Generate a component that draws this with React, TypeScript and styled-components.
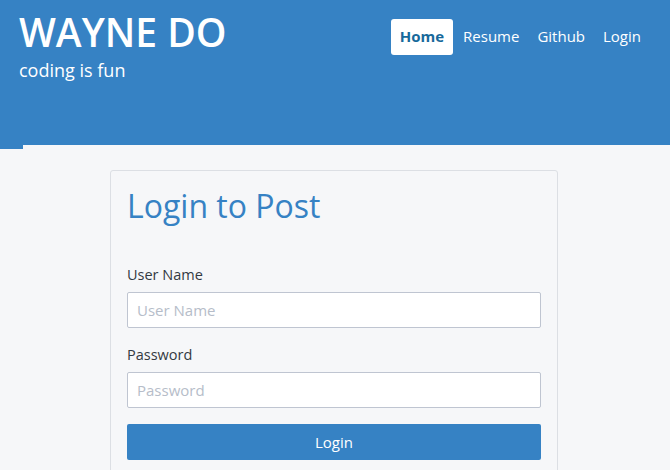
import React from "react";
import styled, { createGlobalStyle } from "styled-components";

const Global = createGlobalStyle`
  body {
    margin: 0;
    background: #f6f7f9;
    font-family: "Open Sans", "Noto Sans", sans-serif;
  }
  * { box-sizing: border-box; }
`;

const Header = styled.header`
  background: #3682c4;
  height: 145px;
  padding: 0 20px 0 19px;
  display: flex;
  justify-content: space-between;
  align-items: flex-start;
`;

const Tab = styled.div`
  width: 23px;
  height: 4px;
  background: #3682c4;
`;

const Brand = styled.div`
  display: flex;
  flex-direction: column;
  padding-top: 8px;
`;

const Title = styled.h1`
  margin: 0;
  color: #fff;
  font-size: 39px;
  font-weight: 600;
  line-height: 48px;
`;

const Tagline = styled.div`
  color: #fff;
  font-size: 18px;
  line-height: 24px;
  margin-top: 2px;
`;

const Nav = styled.nav`
  display: flex;
  margin-top: 19px;
`;

const NavLink = styled.a<{ $active?: boolean }>`
  display: block;
  height: 36px;
  line-height: 34px;
  padding: 0 9px;
  border-radius: 3px;
  font-size: 15px;
  text-decoration: none;
  background: ${(p) => (p.$active ? "#fff" : "transparent")};
  color: ${(p) => (p.$active ? "#17699b" : "#fff")};
  font-weight: ${(p) => (p.$active ? 700 : 400)};
  margin-right: ${(p) => (p.$active ? "1px" : "0")};
`;

const Main = styled.main`
  padding: 21px 0 0 110px;
`;

const Card = styled.section`
  width: 448px;
  border: 1px solid #dcdfe4;
  border-radius: 3px;
  padding: 11px 16px 16px;
`;

const CardTitle = styled.h2`
  margin: 0 0 34px;
  color: #3682c4;
  font-size: 32px;
  font-weight: 400;
  line-height: 48px;
`;

const Field = styled.div`
  display: flex;
  flex-direction: column;
  margin-bottom: 16px;
`;

const Label = styled.label`
  color: #333a42;
  font-size: 14.5px;
  line-height: 22px;
  margin-bottom: 6px;
`;

const Input = styled.input`
  height: 36px;
  border: 1px solid #bfc5d1;
  border-radius: 2px;
  background: #fff;
  padding: 0 9px;
  font-family: inherit;
  font-size: 15px;
  color: #333;
  &::placeholder { color: #b6bdc9; }
`;

const Button = styled.button`
  width: 100%;
  height: 36px;
  border: none;
  border-radius: 2px;
  background: #3682c4;
  color: #fff;
  font-family: inherit;
  font-size: 15px;
`;

export default function App() {
  return (
    <>
      <Global />
      <Header>
        <Brand>
          <Title>WAYNE DO</Title>
          <Tagline>coding is fun</Tagline>
        </Brand>
        <Nav>
          <NavLink $active href="#">Home</NavLink>
          <NavLink href="#">Resume</NavLink>
          <NavLink href="#">Github</NavLink>
          <NavLink href="#">Login</NavLink>
        </Nav>
      </Header>
      <Tab />
      <Main>
        <Card>
          <CardTitle>Login to Post</CardTitle>
          <Field>
            <Label>User Name</Label>
            <Input placeholder="User Name" />
          </Field>
          <Field>
            <Label>Password</Label>
            <Input type="password" placeholder="Password" />
          </Field>
          <Button>Login</Button>
        </Card>
      </Main>
    </>
  );
}
